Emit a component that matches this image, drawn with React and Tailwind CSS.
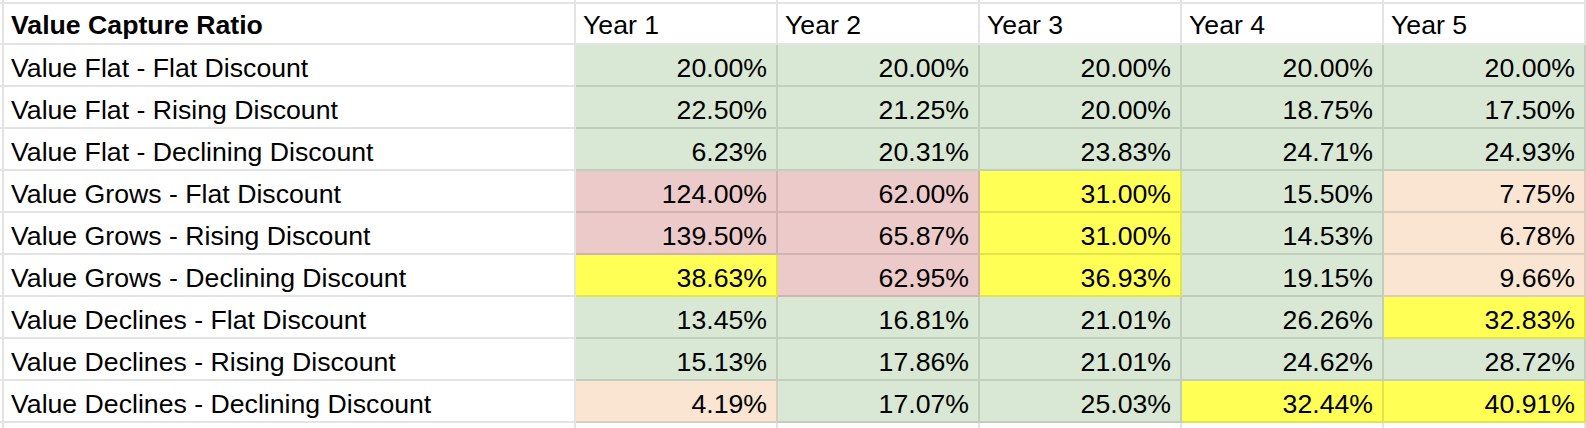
import React from "react";

const G = "bg-[#d9e8d4]";
const R = "bg-[#eccaca]";
const Y = "bg-[#ffff55]";
const P = "bg-[#f9e5d2]";

const header = ["Year 1", "Year 2", "Year 3", "Year 4", "Year 5"];

const rows = [
  ["Value Flat - Flat Discount", [["20.00%", G], ["20.00%", G], ["20.00%", G], ["20.00%", G], ["20.00%", G]]],
  ["Value Flat - Rising Discount", [["22.50%", G], ["21.25%", G], ["20.00%", G], ["18.75%", G], ["17.50%", G]]],
  ["Value Flat - Declining Discount", [["6.23%", G], ["20.31%", G], ["23.83%", G], ["24.71%", G], ["24.93%", G]]],
  ["Value Grows - Flat Discount", [["124.00%", R], ["62.00%", R], ["31.00%", Y], ["15.50%", G], ["7.75%", P]]],
  ["Value Grows - Rising Discount", [["139.50%", R], ["65.87%", R], ["31.00%", Y], ["14.53%", G], ["6.78%", P]]],
  ["Value Grows - Declining Discount", [["38.63%", Y], ["62.95%", R], ["36.93%", Y], ["19.15%", G], ["9.66%", P]]],
  ["Value Declines - Flat Discount", [["13.45%", G], ["16.81%", G], ["21.01%", G], ["26.26%", G], ["32.83%", Y]]],
  ["Value Declines - Rising Discount", [["15.13%", G], ["17.86%", G], ["21.01%", G], ["24.62%", G], ["28.72%", G]]],
  ["Value Declines - Declining Discount", [["4.19%", P], ["17.07%", G], ["25.03%", G], ["32.44%", Y], ["40.91%", Y]]],
];

const line = "border-black/[0.11]";

function Cell({ children, className = "" }) {
  return (
    <div className={`flex items-end border-r-2 border-b-2 ${line} leading-[30px] ${className}`}>
      {children}
    </div>
  );
}

export default function App() {
  return (
    <div
      className="w-[1586px] h-[428px] overflow-hidden bg-white text-black text-[26.67px]"
      style={{ fontFamily: '"Liberation Sans", Arial, sans-serif' }}
    >
      <div className="grid grid-cols-[4px_572px_repeat(5,202px)] grid-rows-[4px_41px_repeat(9,42px)_10px]">
        {/* partial row above */}
        {Array.from({ length: 7 }).map((_, i) => (
          <div key={"t" + i} className={`border-r-2 border-b-2 ${line}`} />
        ))}

        {/* header */}
        <div className={`border-r-2 border-b-2 ${line}`} />
        <Cell className="pl-[7px] pb-[3px] font-bold">Value Capture Ratio</Cell>
        {header.map((h) => (
          <Cell key={h} className="pl-[7px] pb-[3px]">{h}</Cell>
        ))}

        {rows.map(([label, vals]) => (
          <React.Fragment key={label}>
            <div className={`border-r-2 border-b-2 ${line}`} />
            <Cell className="pl-[7px] pb-[2px]">{label}</Cell>
            {vals.map(([v, bg], i) => (
              <Cell key={i} className={`${bg} justify-end pr-[9px] pb-[2px]`}>{v}</Cell>
            ))}
          </React.Fragment>
        ))}

        {/* partial row below */}
        {Array.from({ length: 7 }).map((_, i) => (
          <div key={"b" + i} className={`border-r-2 ${line}`} />
        ))}
      </div>
    </div>
  );
}
